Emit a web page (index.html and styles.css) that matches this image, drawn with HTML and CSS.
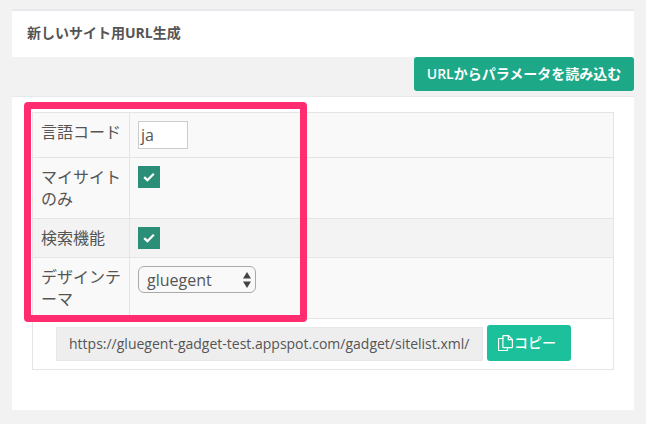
FILE: index.html
```html
<!DOCTYPE html>
<html lang="ja">
<head>
<meta charset="utf-8">
<title>新しいサイト用URL生成</title>
<link rel="stylesheet" href="styles.css">
</head>
<body>
<div class="page">
  <div class="head-panel"><h2 class="title">新しいサイト用URL生成</h2></div>
  <div class="action-row"><button class="load-btn" type="button">URLからパラメータを読み込む</button></div>
  <div class="body-panel">
    <table class="form-table">
      <tr class="row">
        <th class="label">言語コード</th>
        <td class="value"><div class="lang-input">ja</div></td>
      </tr>
      <tr class="row">
        <th class="label">マイサイトのみ</th>
        <td class="value"><span class="check"><svg viewBox="0 0 12 10" width="12" height="10"><path d="M1.2 5.2 4.4 8.2 10.8 1.8" fill="none" stroke="#fff" stroke-width="2.3"/></svg></span></td>
      </tr>
      <tr class="row row-alt">
        <th class="label">検索機能</th>
        <td class="value"><span class="check"><svg viewBox="0 0 12 10" width="12" height="10"><path d="M1.2 5.2 4.4 8.2 10.8 1.8" fill="none" stroke="#fff" stroke-width="2.3"/></svg></span></td>
      </tr>
      <tr class="row">
        <th class="label">デザインテーマ</th>
        <td class="value">
          <div class="select"><span>gluegent</span><svg viewBox="0 0 8 16" width="8" height="16"><path d="M4 0 8 6.5H0Z M4 16 8 9.5H0Z" fill="#444"/></svg></div>
        </td>
      </tr>
      <tr class="url-row">
        <td class="url-cell" colspan="2">
          <div class="url-line">
            <div class="url-box">https://gluegent-gadget-test.appspot.com/gadget/sitelist.xml/</div>
            <button class="copy-btn" type="button"><svg viewBox="0 0 15 16" width="15" height="16"><path d="M5.5 3.5H1.2a.7.7 0 0 0-.7.7V15a.7.7 0 0 0 .7.7h7.6a.7.7 0 0 0 .7-.7v-2.500" fill="none" stroke="#fff" stroke-width="1.200"/><path d="M5.500.6h5l3.900 3.900v7.500a.6.6 0 0 1-.6.6H5.500a.6.6 0 0 1-.6-.6V1.200a.6.6 0 0 1 .6-.6ZM10.300.8v3.900h3.900" fill="none" stroke="#fff" stroke-width="1.200"/></svg><span>コピー</span></button>
          </div>
        </td>
      </tr>
    </table>
    <div class="highlight"></div>
  </div>
</div>
</body>
</html>
```
FILE: styles.css
```css
* { box-sizing: border-box; }
html, body { margin: 0; height: 424px; overflow: hidden; background: #f2f2f2; }
body { font-family: "Open Sans", "Noto Sans CJK JP", sans-serif; color: #555; }
.page { padding: 9px 12px 0; }
.head-panel { height: 48px; background: #fff; border-top: 2px solid #e8e9ec; padding: 13px 15px 0; }
.title { margin: 0; font-size: 14px; line-height: 18px; font-weight: 700; color: #555; }
.action-row { display: flex; justify-content: flex-end; height: 39px; }
.load-btn { height: 34px; width: 220px; padding: 0; border: 0; border-radius: 3px; background: #1da888; color: #fff; font: 600 14px/34px "Open Sans", "Noto Sans CJK JP", sans-serif; }
.body-panel { position: relative; height: 314px; background: #fff; border-top: 1px solid #e8e9ec; padding: 15px 20px 0; }
.form-table { width: 582px; border-collapse: collapse; table-layout: fixed; font-size: 16px; line-height: 22px; }
.form-table td, .form-table th { border: 1px solid #e5e5e5; }
.row { background: #f9f9f9; }
.row-alt { background: #f3f3f3; }
.label { width: 97px; padding: 8px 7px 8px 8px; text-align: left; font-weight: 400; vertical-align: top; color: #555; }
.value { padding: 8px; vertical-align: top; }
.lang-input { width: 50px; height: 28px; padding-left: 2px; background: #fff; border: 1px solid #ccc; font-size: 16px; line-height: 26px; color: #555; }
.check { display: flex; width: 22px; height: 22px; align-items: center; justify-content: center; background: #2b8f77; }
.select { display: flex; width: 118px; height: 27px; align-items: center; justify-content: space-between; padding: 0 4px 0 8px; background: #f9f9f9; border: 1px solid #aaa; border-radius: 6px; font-size: 16px; color: #555; }
.url-row { background: #fff; }
.url-cell { padding: 6px 8px 8px 23px; }
.url-line { display: flex; gap: 4px; align-items: flex-end; height: 36px; }
.url-box { width: 427px; height: 34px; padding-left: 12px; background: #eee; border: 1px solid #e8e8e8; font-size: 14px; line-height: 32px; color: #555; white-space: nowrap; }
.copy-btn { display: flex; width: 84px; height: 36px; gap: 1px; align-items: center; padding: 0 0 0 11px; border: 0; border-radius: 3px; background: #1cc09a; color: #fff; font: 500 14px/36px "Open Sans", "Noto Sans CJK JP", sans-serif; }
.highlight { position: absolute; left: 12px; top: 5px; width: 283px; height: 220px; border: 7px solid #ff2d6f; border-radius: 4px; }
```
